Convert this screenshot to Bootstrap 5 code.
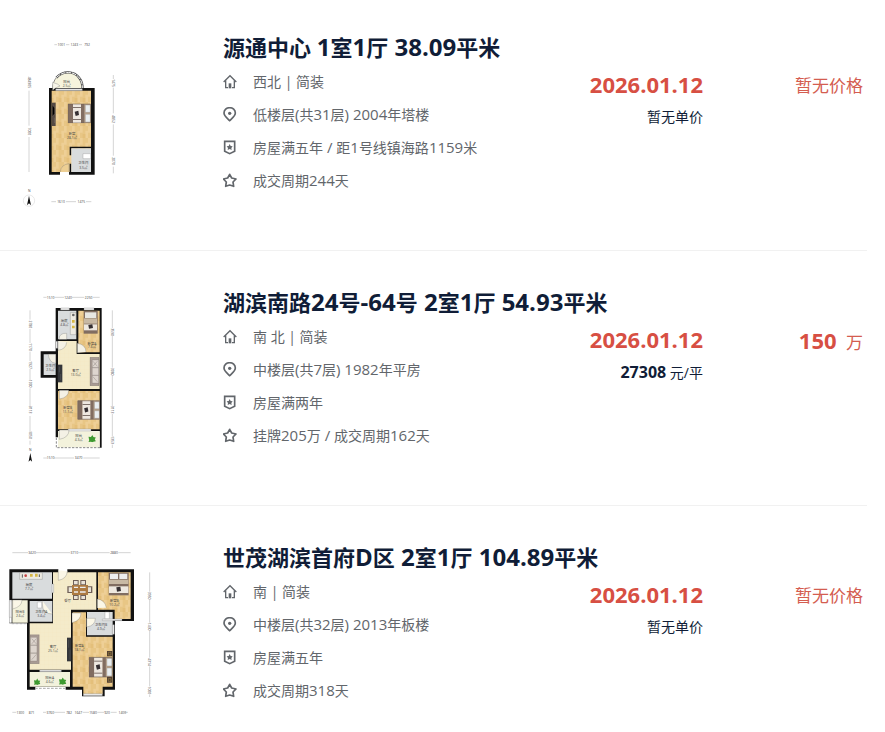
<!DOCTYPE html>
<html lang="zh-CN">
<head>
<meta charset="utf-8">
<meta name="viewport" content="width=device-width, initial-scale=1">
<title>成交房源</title>
<link href="https://cdn.jsdelivr.net/npm/bootstrap@5.3.0/dist/css/bootstrap.min.css" rel="stylesheet">
<style>
body{font-family:"Open Sans","Noto Sans CJK SC",sans-serif;color:#101d37;background:#fff}
.deals{padding-right:18px}
.deal{padding:30px 4px 30px 0;border-bottom:1px solid #f1f1f1}
.deal+.deal{margin-top:4px}
.deal:last-child{border-bottom:0;padding-bottom:0}
.plan-link{width:223px}
.plan{display:block;width:160px;height:190px}
.plan text{font-size:10px;fill:#444;text-anchor:middle}
.deal-title{font-size:22px;line-height:34px;font-weight:700}
.deal-title a{color:#101d37}
.num{font-size:24px}
.facts{padding-top:1px}
.facts li{height:33px;gap:16px;font-size:14px;line-height:33px;color:#62666b}
.facts .num{font-size:15px}
.facts svg{width:14px;height:15px;flex:none}
.sold{padding-top:4px}
.sold-date{font-size:22px;line-height:33px;font-weight:700;color:#d74f43}
.sold-unit{font-size:14px;line-height:32px}
.sold-unit b{font-size:16px}
.price{width:160px;padding-top:5px;font-size:17px;line-height:33px;color:#d45d50}
.price b{font-size:22px;color:#d74f43;margin-right:5px}
</style>
<script src="https://cdn.jsdelivr.net/npm/bootstrap@5.3.0/dist/js/bootstrap.bundle.min.js"></script>
</head>
<body>
<svg width="0" height="0" class="position-absolute" aria-hidden="true">
<defs>
<pattern id="wood" width="24" height="36" patternUnits="userSpaceOnUse"><path fill="#e8c685" d="M0 0h24v36H0z"/><path fill="#eecf96" d="M0 0h8v20H0zM16 14h8v22h-8z"/><path fill="#e4bf7a" d="M8 24h8v12H8z"/></pattern>
<pattern id="tile" width="12" height="12" patternUnits="userSpaceOnUse"><path fill="#f4ebca" d="M0 0h12v12H0z"/><path stroke="#efe3bd" d="M0 0h12M0 0v12"/></pattern>
<symbol id="home" viewBox="0 0 42 45"><path d="M2 24 21 5l19 19M8 19v22h7m12 0h7V19" fill="none" stroke="#62666b" stroke-width="4"/><path d="M17 28h8v15h-8z" fill="#62666b"/></symbol>
<symbol id="pin" viewBox="0 0 42 45"><path d="M20 41C12 33 3 27 3 18a17 16 0 0 1 34 0c0 9-9 15-17 23z" fill="none" stroke="#62666b" stroke-width="5"/><circle cx="20" cy="19" r="5" fill="#62666b"/></symbol>
<symbol id="shield" viewBox="0 0 42 45"><path d="M5 4h30v30l-15 7-15-7z" fill="none" stroke="#62666b" stroke-width="5"/><path d="m20 12 3 6 6 1-4 5 1 6-6-3-6 3 1-6-4-5 6-1z" fill="#62666b"/></symbol>
<symbol id="star" viewBox="0 0 42 45"><path d="m20 4 6 11 13 3-9 9 2 13-12-4-12 4 2-13-9-9 13-3z" fill="none" stroke="#62666b" stroke-width="5" stroke-linejoin="round"/></symbol>
<symbol id="bed" viewBox="0 0 70 60"><path fill="#b9a38c" d="M1 2h68v57H1z"/><path fill="#816d61" d="M1 2h15v57H1zM40 2h10v57H40z"/><path fill="#eee8e0" d="M16 2h24v57H16z"/><path fill="#5b4b46" d="M16 12h24v2H16zM16 47h24v2H16z"/><path fill="#352f32" d="m21 25 11-3 2 13-10 3z"/><path fill="#e9eef0" stroke="#8b8580" d="M53 5h15v22H53zM53 33h15v23H53z"/><path stroke="#6f6058" stroke-width="2" fill="none" d="M1 2h68v57H1z"/></symbol>
<symbol id="sofa" viewBox="0 0 30 90"><path fill="#a89b94" stroke="#655d59" d="M1 1h28v88H1z"/><path fill="#ddd5ce" stroke="#817773" d="M8 9h20v24H8zM8 33h20v24H8zM8 57h20v24H8z"/><path fill="none" stroke="#6e6563" d="m10 13 14 16M24 13 10 29m0 32 14 16"/></symbol>
<symbol id="plant" viewBox="0 0 24 22"><path fill="#3e9a30" d="m2 6 7 1 4-6 3 6 7 1-3 5 3 6-7 1-3 2-4-2-7 1 2-5z"/></symbol>
<symbol id="north" viewBox="0 0 14 30"><path d="m7 0 6 29-6-6-6 6z" fill="#111"/></symbol>
</defs>
</svg>

<main class="container-fluid deals ps-0">
<ul class="list-unstyled mb-0">

<li class="deal d-flex align-items-start">
<a href="#" class="plan-link flex-shrink-0" aria-label="源通中心户型图">
<svg class="plan" viewBox="0 0 480 570" aria-hidden="true">
<g stroke="#aaa" stroke-width="1.5" fill="none"><path d="M163 44h8m27 0h10m29 0h9M87 182v105m0 34v105M340 135v12m0 26v77m0 33v94m0 33v20M154 515h14m30 0h30m30 0h16"/></g>
<text x="184" y="48">1001</text><text x="223" y="48">1243</text><text x="261" y="48">792</text>
<text transform="translate(84 157) rotate(90)">484905</text><text transform="translate(84 304) rotate(90)">7000</text>
<text transform="translate(336 159) rotate(90)">1475</text><text transform="translate(336 267) rotate(90)">4852</text><text transform="translate(336 393) rotate(90)">2070</text>
<text x="183" y="519">1610</text><text x="244" y="519">1475</text>
<path fill="#f6f4dd" stroke="#555" stroke-width="2" d="M158 178c-2-28 19-52 46-52 26 0 46 23 45 52z"/><path fill="none" stroke="#555" stroke-width="7" d="M169 143c19-21 53-21 69 1 7 9 10 20 9 32"/><path fill="none" stroke="#eee" stroke-width="3" stroke-dasharray="14 3" d="M169 143c19-21 53-21 69 1 7 9 10 20 9 32"/>
<path fill="#111" d="M147 174h137v260H147z"/><path fill="url(#wood)" d="M155 182h118v244H155z"/><path fill="#fff" d="M180 426h27v10h-27z"/><path fill="#eee" stroke="#777" d="M167 176h80v6h-80z"/>
<path fill="#f8f6e9" stroke="#666" d="M158 181v-24q18 5 22 11l-14 6"/>
<path fill="#111" d="M209 350h64v5h-59v21h-5zM209 401h5v25h-5z"/><path fill="#d9dcdd" d="M214 355h59v71h-59z"/><path fill="#fff" stroke="#888" d="M249 371h23v15h-23z"/>
<path d="M207 426v-25q-25 3-26 25" fill="#edcf94" stroke="#777"/>
<path fill="#554a44" d="M155 218h12v70h-12z"/><path stroke="#9c8f84" d="m158 225 6 9v17l-6 8m6 4v16"/>
<use href="#bed" x="203" y="220" width="70" height="60"/>
<text x="200" y="158">阳台</text><text x="200" y="170">2.5㎡</text><text x="216" y="314">卧室</text><text x="216" y="326">28.1㎡</text><text x="250" y="403">卫生间</text><text x="250" y="416">3.5㎡</text>
<circle cx="87" cy="512" r="17" fill="none" stroke="#bbb"/><use href="#north" x="80" y="497" width="14" height="30"/><text x="88" y="487">N</text>
</svg></a>
<div class="flex-grow-1">
<h2 class="deal-title mb-0"><a href="#" class="text-decoration-none">源通中心 <span class="num">1</span>室<span class="num">1</span>厅<span class="num"> 38.09</span>平米</a></h2>
<div class="d-flex">
<ul class="facts list-unstyled mb-0 flex-grow-1">
<li class="d-flex align-items-center"><svg aria-hidden="true"><use href="#home"/></svg><span>西北 | 简装</span></li>
<li class="d-flex align-items-center"><svg aria-hidden="true"><use href="#pin"/></svg><span>低楼层<span class="num">(</span>共<span class="num">31</span>层<span class="num">) 2004</span>年塔楼</span></li>
<li class="d-flex align-items-center"><svg aria-hidden="true"><use href="#shield"/></svg><span>房屋满五年<span class="num"> / </span>距<span class="num">1</span>号线镇海路<span class="num">1159</span>米</span></li>
<li class="d-flex align-items-center"><svg aria-hidden="true"><use href="#star"/></svg><span>成交周期<span class="num">244</span>天</span></li>
</ul>
<div class="sold text-end"><div class="sold-date">2026.01.12</div><div class="sold-unit">暂无单价</div></div>
<div class="price text-end">暂无价格</div>
</div></div>
</li>

<li class="deal d-flex align-items-start">
<a href="#" class="plan-link flex-shrink-0" aria-label="湖滨南路24号-64号户型图">
<svg class="plan" viewBox="0 0 480 570" aria-hidden="true">
<path stroke="#aaa" stroke-width="1.5" fill="none" d="M130 37h10m24 0h28m24 0h37m26 0h20M90 76v28m0 28v42m0 26v28m0 24v34m0 24v57m0 26v50m0 24v12M337 76v53m0 24v95m0 24v91m0 24v68m0 24v10M130 519h12m20 0h60m28 0h49"/>
<text x="152" y="41">1510</text><text x="204" y="41">1240</text><text x="266" y="41">2250</text><text x="152" y="523">1510</text><text x="236" y="523">3470</text>
<text transform="translate(87 118) rotate(90)">2780</text><text transform="translate(87 186) rotate(90)">1170</text><text transform="translate(87 240) rotate(90)">1927</text><text transform="translate(87 296) rotate(90)">1000</text><text transform="translate(87 374) rotate(90)">3113</text><text transform="translate(87 450) rotate(90)">1050</text>
<text transform="translate(333 141) rotate(90)">3590</text><text transform="translate(333 260) rotate(90)">3080</text><text transform="translate(333 374) rotate(90)">3113</text><text transform="translate(333 465) rotate(90)">1353</text>
<path fill="#111" d="M167 69h138v419h-6v-50H174v19h-7V278h-45v-79h45z"/>
<path fill="#d9dcdd" d="M174 77h55v86h-55zM131 208h36v62h-36z"/><path fill="url(#wood)" d="M235 77h64v125h-64zM174 318h125v115H174z"/><path fill="url(#tile)" d="M174 168h56v39h69v105H174z"/><path fill="#f3f2dc" d="M174 439h125v48H174z"/>
<path fill="#eee" stroke="#888" d="M182 69h26v6h-26zM252 69h30v6h-30zM204 432h69v6h-69zM167 169h6v21h-6z"/>
<path fill="#f4f1e5" stroke="#777" d="M174 168v28q24-3 26-24M177 163q1-20 23-18v18M167 235v-27h-22q2 25 22 27M232 203v-28q25 3 26 26M178 342v-26h28q0 22-28 26M178 463v-28h29q0 23-29 28"/>
<path fill="#eeebe3" stroke="#777" d="M211 83h17v66h-17z"/><path fill="#d6b643" d="M216 105h8v8h-8zM216 122h8v8h-8z"/><circle cx="220" cy="90" r="4" fill="#666"/>
<path fill="#816d61" d="M251 78h42v68h-42z"/><path fill="#e7e7e2" d="M255 82h34v17h-34z"/><path fill="#c8b9a4" d="M252 100h39v16h-39z"/><path fill="#eee8e0" d="M252 118h39v18h-39z"/><path fill="#352f32" d="m265 120 12-2 2 11-12 2z"/>
<use href="#bed" x="232" y="344" width="68" height="61"/><use href="#sofa" x="268" y="216" width="31" height="87"/>
<path fill="#34363a" d="M173 239h14v53h-14z"/><path stroke="#777" d="M178 245v17m4 5v18"/>
<path fill="none" stroke="#888" stroke-width="3" stroke-dasharray="7 4" d="M169 458v30h132"/><use href="#plant" x="263" y="449" width="26" height="23"/>
<text x="193" y="112">厨房</text><text x="193" y="124">4.8㎡</text><text x="276" y="179">卧室A</text><text x="276" y="190">7.6㎡</text><text x="151" y="247">卫生间</text><text x="151" y="258">2.5㎡</text><text x="227" y="261">客厅</text><text x="227" y="273">13.0㎡</text><text x="203" y="373">卧室B</text><text x="203" y="384">11.1㎡</text><text x="236" y="457">阳台</text><text x="236" y="468">4.3㎡</text>
<use href="#north" x="84" y="504" width="14" height="27"/><text x="91" y="499">N</text>
</svg></a>
<div class="flex-grow-1">
<h2 class="deal-title mb-0"><a href="#" class="text-decoration-none">湖滨南路<span class="num">24</span>号<span class="num">-64</span>号<span class="num"> 2</span>室<span class="num">1</span>厅<span class="num"> 54.93</span>平米</a></h2>
<div class="d-flex">
<ul class="facts list-unstyled mb-0 flex-grow-1">
<li class="d-flex align-items-center"><svg aria-hidden="true"><use href="#home"/></svg><span>南 北 | 简装</span></li>
<li class="d-flex align-items-center"><svg aria-hidden="true"><use href="#pin"/></svg><span>中楼层<span class="num">(</span>共<span class="num">7</span>层<span class="num">) 1982</span>年平房</span></li>
<li class="d-flex align-items-center"><svg aria-hidden="true"><use href="#shield"/></svg><span>房屋满两年</span></li>
<li class="d-flex align-items-center"><svg aria-hidden="true"><use href="#star"/></svg><span>挂牌<span class="num">205</span>万<span class="num"> / </span>成交周期<span class="num">162</span>天</span></li>
</ul>
<div class="sold text-end"><div class="sold-date">2026.01.12</div><div class="sold-unit"><b>27308</b> 元/平</div></div>
<div class="price text-end"><b>150</b> 万</div>
</div></div>
</li>

<li class="deal d-flex align-items-start">
<a href="#" class="plan-link flex-shrink-0" aria-label="世茂湖滨首府D区户型图">
<svg class="plan" viewBox="0 0 480 570" aria-hidden="true">
<path stroke="#aaa" stroke-width="1.5" fill="none" d="M37 38h47m24 0h103m24 0h94m26 0h37M449 97v58m0 24v69m0 24v81m0 26v60m0 24v8M37 517h12m80 0h10m24 0h32m53 0h19m25 0h20m20 0h18m24 0h10"/>
<text x="96" y="42">3420</text><text x="223" y="42">3710</text><text x="342" y="42">2880</text>
<text transform="translate(445 167) rotate(90)">3950</text><text transform="translate(445 260) rotate(90)">1430</text><text transform="translate(445 366) rotate(90)">4314</text><text transform="translate(445 451) rotate(90)">1000</text>
<text x="61" y="521">1300</text><text x="95" y="521">871</text><text x="151" y="521">3760</text><text x="207" y="521">782</text><text x="235" y="521">1647</text><text x="279" y="521">1580</text><text x="321" y="521">920</text><text x="367" y="521">1400</text>
<path fill="#111" d="M28 88h374v155h-57v206h-31v20h-68v-20H81V250H28z"/><path fill="#fff" d="M28 180h7v68h-7zM175 87h27v10h-27zM106 441h91v9h-91z"/>
<path fill="url(#tile)" d="M159 97h130v112h-76v180H89V250h70z"/><path fill="url(#wood)" d="M294 97h98v140h-48v-28h-50zM218 217h40v73h80v150h-30v23h-58v-23h-32z"/>
<path fill="#d9dcdd" d="M37 97h119v79H37zM89 183h68v62H89zM261 216h77v70h-77z"/><path fill="#f3f2dc" d="M37 181h46v67H37zM89 396h121v44H89z"/>
<path fill="#eee" stroke="#888" d="M28 182h7v50h-7zM156 132h5v26h-5zM307 237h59v5h-59zM337 254h6v29h-6zM119 390h65v5h-65zM250 461h57v6h-57z"/>
<path fill="none" stroke="#aaa" stroke-width="3" stroke-dasharray="8 4" d="M35 251h46M105 445h91"/>
<path fill="#fbf7e7" stroke="#777" d="M175 91v30q25-4 27-27M38 207v-27h28q0 20-28 27M127 182v10q0 30 30 30M292 204v-27q23 3 27 26M216 248v-29h27q0 23-27 29M260 261v-26h26q0 22-26 26"/>
<path fill="#eeebe3" stroke="#777" d="M59 98h68v20H59z"/><path fill="#d6b643" d="M90 102h8v8h-8zM105 101h8v9h-8z"/><circle cx="77" cy="107" r="4" fill="#c34242"/><path d="M67 103v10m51-10v8" stroke="#555" stroke-width="3"/>
<path fill="#fff" stroke="#888" d="M112 186h13v18h-13zM315 216h13v20h-13z"/>
<path fill="#6f6058" d="M202 139h17v20h-17zM260 139h17v20h-17zM219 120h17v15h-17zM241 120h17v15h-17zM219 164h17v16h-17zM241 164h17v16h-17z"/><path fill="#e9e3d7" d="M206 142h13v14h-13zM260 142h13v14h-13zM222 123h11v10h-11zM244 123h11v10h-11zM222 168h11v9h-11zM244 168h11v9h-11z"/><path fill="#ad7b42" d="M216 135h48v30h-48z"/><path stroke="#eee" stroke-width="4" d="M222 142h12m6 0h17m-35 14h12m6 0h17"/>
<path fill="#816d61" d="M326 98h60v68h-60z"/><path fill="#eee" d="M330 101h24v16h-24zM358 101h24v16h-24z"/><path fill="#c8b9a4" d="M327 119h58v13h-58z"/><path fill="#eee8e0" d="M327 139h58v20h-58z"/><path fill="#352f32" d="m349 142 12-2 2 13-12 2z"/>
<use href="#bed" x="266" y="348" width="72" height="66"/><path fill="#503e33" d="M321 333h16v16h-16zM321 411h16v17h-16z"/><path stroke="#d6b643" fill="none" d="M325 337h8v8h-8zM325 416h8v8h-8z"/>
<g transform="translate(119 0) scale(-1 1)"><use href="#sofa" x="0" y="283" width="30" height="89"/></g>
<path fill="#34363a" d="M201 293h13v71h-13z"/><path stroke="#777" d="M206 299v24m4 6v30"/>
<use href="#plant" x="100" y="413" width="22" height="24"/><use href="#plant" x="175" y="411" width="25" height="24"/>
<text x="87" y="139">厨房</text><text x="87" y="151">7.7㎡</text><text x="203" y="186">餐厅</text><text x="343" y="185">卧室B</text><text x="343" y="197">10.2㎡</text><text x="60" y="219">阳台B</text><text x="60" y="230">2.6㎡</text><text x="124" y="220">卫生间A</text><text x="124" y="231">3.4㎡</text><text x="303" y="258">卫生间B</text><text x="303" y="270">4.9㎡</text><text x="159" y="325">客厅</text><text x="159" y="337">25.1㎡</text><text x="238" y="320">卧室A</text><text x="238" y="332">18.1㎡</text><text x="149" y="418">阳台A</text><text x="149" y="429">4.6㎡</text>
</svg></a>
<div class="flex-grow-1">
<h2 class="deal-title mb-0"><a href="#" class="text-decoration-none">世茂湖滨首府<span class="num">D</span>区<span class="num"> 2</span>室<span class="num">1</span>厅<span class="num"> 104.89</span>平米</a></h2>
<div class="d-flex">
<ul class="facts list-unstyled mb-0 flex-grow-1">
<li class="d-flex align-items-center"><svg aria-hidden="true"><use href="#home"/></svg><span>南 | 简装</span></li>
<li class="d-flex align-items-center"><svg aria-hidden="true"><use href="#pin"/></svg><span>中楼层<span class="num">(</span>共<span class="num">32</span>层<span class="num">) 2013</span>年板楼</span></li>
<li class="d-flex align-items-center"><svg aria-hidden="true"><use href="#shield"/></svg><span>房屋满五年</span></li>
<li class="d-flex align-items-center"><svg aria-hidden="true"><use href="#star"/></svg><span>成交周期<span class="num">318</span>天</span></li>
</ul>
<div class="sold text-end"><div class="sold-date">2026.01.12</div><div class="sold-unit">暂无单价</div></div>
<div class="price text-end">暂无价格</div>
</div></div>
</li>
</ul>
</main>
</body>
</html>
